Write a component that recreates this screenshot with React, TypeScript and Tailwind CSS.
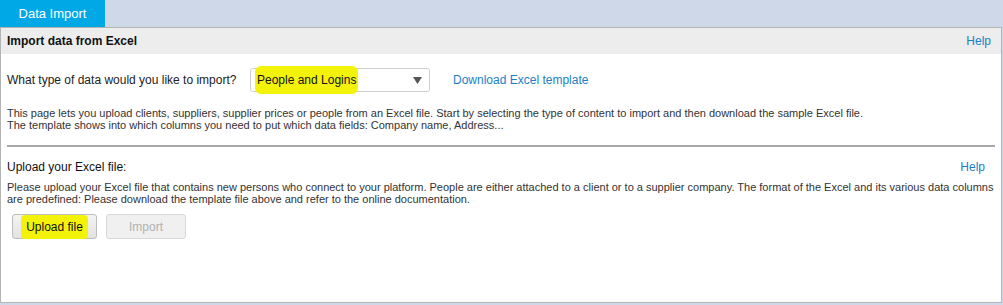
import React from "react";

export default function App() {
  return (
    <div className="w-[1003px] h-[305px] bg-[#cfd8e9] flex flex-col" style={{ fontFamily: '"Liberation Sans", Arial, sans-serif' }}>
      <div className="flex h-[27px] shrink-0">
        <div className="w-[105px] bg-[#00a8e6] text-white text-[13px] flex items-center justify-center pt-[1px]">Data Import</div>
      </div>
      <div className="w-[1002px] h-[276px] bg-white border border-[#b4b4b4] flex flex-col">
        <div className="h-[26px] bg-[#ededed] flex items-center justify-between pl-[6px] pr-[10px]">
          <span className="text-[12px] font-bold text-[#111]">Import data from Excel</span>
          <span className="text-[12px] text-[#1a7fc8]">Help</span>
        </div>
        <div className="flex items-center h-[26px] mt-[13px] pl-[6px]">
          <span className="text-[12px] text-[#222] w-[243px] whitespace-nowrap">What type of data would you like to import?</span>
          <div className="w-[180px] h-[24px] border border-[#cfcfcf] rounded-[3px] flex items-center justify-between pl-[6px] pr-[7px]">
            <span className="bg-[#f3f30a] rounded-[6px] px-[2px] -ml-[2px] py-[5px] text-[12px] text-[#111]">People and Logins</span>
            <svg width="9" height="7" viewBox="0 0 9 7"><path d="M0 0 L9 0 L4.5 7 Z" fill="#555" /></svg>
          </div>
          <span className="ml-[23px] text-[12px] text-[#1a7fc8]">Download Excel template</span>
        </div>
        <div className="mt-[14px] pl-[6px] text-[11px] leading-[12px] text-[#333]">
          <div>This page lets you upload clients, suppliers, supplier prices or people from an Excel file. Start by selecting the type of content to import and then download the sample Excel file.</div>
          <div>The template shows into which columns you need to put which data fields: Company name, Address...</div>
        </div>
        <div className="mx-[6px] mt-[14px] h-[2px] bg-[#a8a8a8]" />
        <div className="flex justify-between items-center pl-[6px] pr-[16px] mt-[11px]">
          <span className="text-[12px] text-[#111]">Upload your Excel file:</span>
          <span className="text-[12px] text-[#1a7fc8]">Help</span>
        </div>
        <div className="mt-[5px] pl-[6px] pr-[6px] text-[11px] leading-[12px] text-[#333]">
          Please upload your Excel file that contains new persons who connect to your platform. People are either attached to a client or to a supplier company. The format of the Excel and its various data columns are predefined: Please download the template file above and refer to the online documentation.
        </div>
        <div className="flex gap-[9px] mt-[9px] pl-[11px]">
          <div className="w-[85px] h-[25px] rounded-[3px] border border-[#bdbdbd] bg-gradient-to-b from-[#f4f4f4] to-[#e2e2e2] flex items-center justify-center">
            <span className="bg-[#f3f30a] rounded-[4px] px-[5px] py-[3px] text-[12px] text-[#111]">Upload file</span>
          </div>
          <div className="w-[80px] h-[25px] rounded-[3px] border border-[#d8d8d8] bg-[#f0f0f0] flex items-center justify-center text-[12px] text-[#b0b0b0]">Import</div>
        </div>
      </div>
    </div>
  );
}
